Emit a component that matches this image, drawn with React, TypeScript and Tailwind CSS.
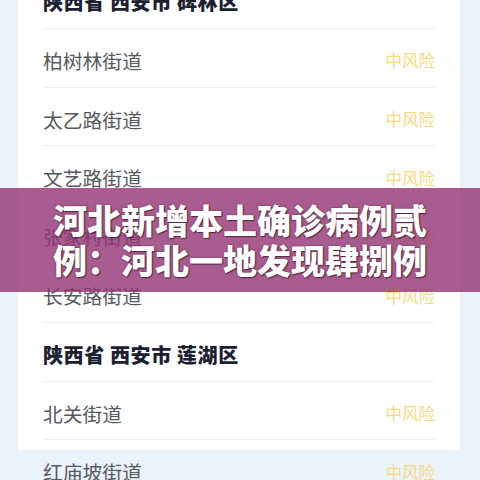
import React from "react";

type Row = { name: string; header?: boolean };

const rows: Row[] = [
  { name: "陕西省 西安市 碑林区", header: true },
  { name: "柏树林街道" },
  { name: "太乙路街道" },
  { name: "文艺路街道" },
  { name: "张家村街道" },
  { name: "长安路街道" },
  { name: "陕西省 西安市 莲湖区", header: true },
  { name: "北关街道" },
  { name: "红庙坡街道" },
];

export default function App() {
  return (
    <div
      className="relative w-[480px] h-[480px] overflow-hidden bg-[#eaf3fb]"
      style={{ fontFamily: '"Noto Sans CJK SC", "Noto Sans", sans-serif' }}
    >
      <div className="ml-[18px] mr-[20px] h-full bg-white pl-[25px] pr-[25px]">
        <div className="-mt-[30px] flex flex-col">
          {rows.map((r, i) => (
            <div
              key={i}
              className="flex h-[58.8px] items-center justify-between border-b border-[#efefef] pt-[6px]"
            >
              {r.header ? (
                <span className="text-[20px] font-black text-[#1b2130] tracking-[0.6px]">{r.name}</span>
              ) : (
                <>
                  <span className="text-[19.8px] text-[#555a60]">{r.name}</span>
                  <span className="text-[16.5px] text-[#f6d97f]">中风险</span>
                </>
              )}
            </div>
          ))}
        </div>
      </div>
      <div className="absolute left-0 top-[188px] flex h-[104px] w-full flex-col items-center justify-center bg-[rgba(148,51,115,0.8)]">
        <div
          className="text-center text-[34px] font-black leading-[40px] text-white"
          style={{ textShadow: "0 0 2px rgba(60,20,40,0.7), 1px 1px 1px rgba(40,10,30,0.6)" }}
        >
          <div>河北新增本土确诊病例贰</div>
          <div>例：河北一地发现肆捌例</div>
        </div>
      </div>
    </div>
  );
}
